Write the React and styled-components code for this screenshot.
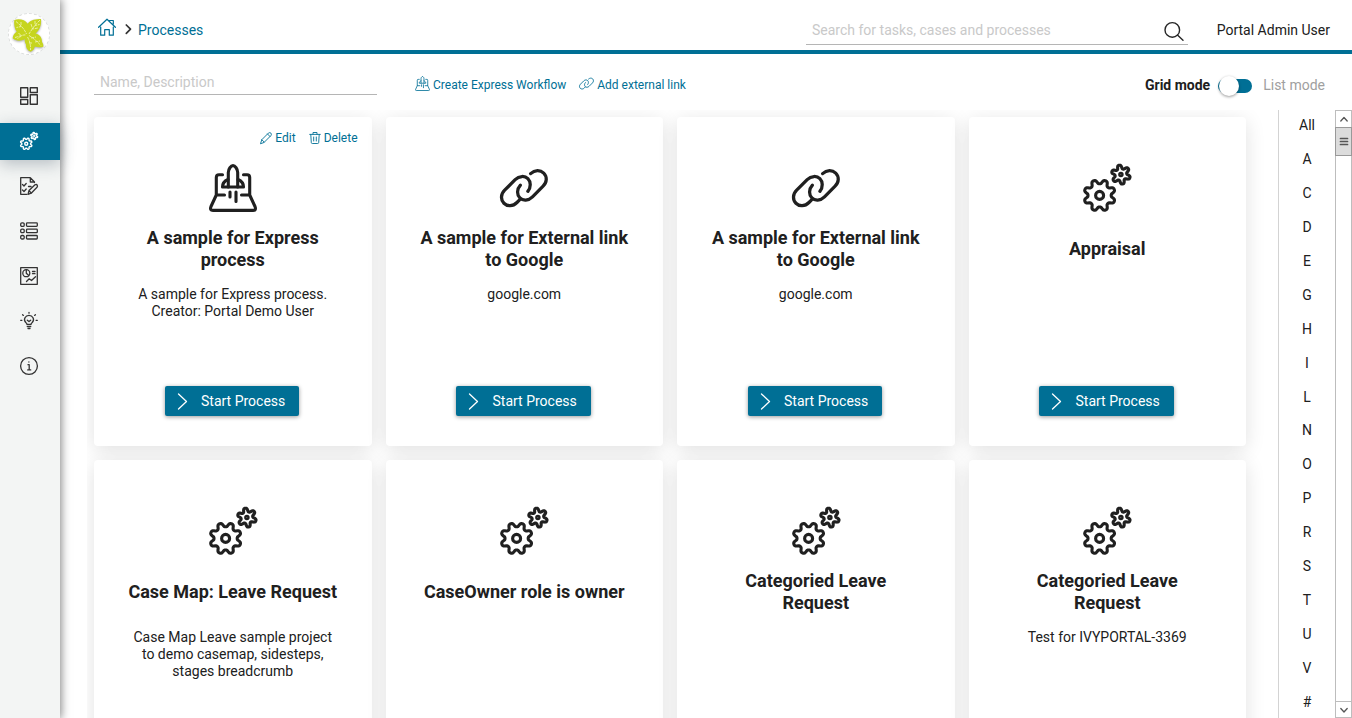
import React from "react";
import styled, { createGlobalStyle, css } from "styled-components";

const BLUE = "#006f95";
const INK = "#202020";

const GlobalStyle = createGlobalStyle`
  * { box-sizing: border-box; }
  html, body { margin: 0; height: 100%; overflow: hidden; background: #fff; }
  body { font-family: Roboto, "Liberation Sans", sans-serif; font-size: 14px; color: ${INK}; }
  svg { display: block; flex: none; overflow: visible; }
`;

const Shell = styled.div`
  display: flex;
  width: 1352px;
  height: 718px;
  overflow: hidden;
`;

const Sidebar = styled.nav`
  width: 60px;
  flex: none;
  position: relative;
  z-index: 2;
  background: #f3f5f4;
  box-shadow: 0 0 9px 1px rgba(0, 0, 0, 0.5);
`;

const Logo = styled.div`
  width: 42px;
  height: 42px;
  margin: 13px 0 23px 8px;
  border-radius: 50%;
  border: 1px dashed #dcdedd;
  background: #fff;
`;

const NavItem = styled.div`
  display: flex;
  align-items: center;
  height: 37px;
  margin-bottom: 8px;
  padding: 0 0 1px 20px;
  color: #333;
  ${(p) => p.$active && css`
    background: ${BLUE};
    color: #fff;
    box-shadow: 0 4px 16px rgba(40, 60, 80, 0.3);
  `}
`;

const Main = styled.main`
  flex: 1;
  min-width: 0;
  display: flex;
  flex-direction: column;
`;

const Header = styled.header`
  display: flex;
  height: 54px;
  flex: none;
  border-bottom: 4px solid ${BLUE};
  padding: 16px 22px 0 38px;
`;

const Breadcrumb = styled.div`
  display: flex;
  align-items: center;
  height: 28px;
  flex: 1;
  color: ${BLUE};
`;

const Crumb = styled.span`
  margin-left: 4px;
`;

const SearchBox = styled.div`
  display: flex;
  justify-content: space-between;
  align-items: center;
  width: 382px;
  height: 29px;
  padding: 0 4px 0 6px;
  border-bottom: 1px solid #b5b5b5;
  color: #c9c9c9;
`;

const UserName = styled.div`
  width: 142px;
  line-height: 28px;
  text-align: right;
  white-space: nowrap;
`;

const Toolbar = styled.div`
  display: flex;
  height: 56px;
  flex: none;
  padding: 15px 27px 0 34px;
`;

const Filter = styled.div`
  width: 283px;
  height: 26px;
  line-height: 27px;
  padding-left: 6px;
  border-bottom: 1px solid #b5b5b5;
  color: #c9c9c9;
`;

const Actions = styled.div`
  display: flex;
  flex: 1;
  gap: 13px;
  height: 32px;
  padding-left: 38px;
`;

const TextLink = styled.a`
  display: flex;
  align-items: center;
  gap: 3px;
  color: ${BLUE};
  font-size: 12px;
  svg { margin-bottom: ${(p) => p.$lift || 0}px; }
`;

const ModeSwitch = styled.div`
  display: flex;
  align-items: center;
  height: 32px;
`;

const ModeLabel = styled.span`
  font-weight: ${(p) => (p.$on ? 700 : 400)};
  color: ${(p) => (p.$on ? INK : "#a0a0a0")};
`;

const Track = styled.div`
  width: 34px;
  height: 14px;
  margin: 2px 11px 0 8px;
  border-radius: 7px;
  background: ${BLUE};
`;

const Knob = styled.div`
  width: 20px;
  height: 20px;
  margin: -3px 0 0 1px;
  border-radius: 50%;
  background: #fff;
  box-shadow: 0 1px 3px rgba(0, 0, 0, 0.4);
`;

const Content = styled.section`
  display: flex;
  flex: 1;
  min-height: 0;
  padding-left: 27px;
`;

const Grid = styled.div`
  flex: 1;
  display: grid;
  grid-template-columns: repeat(4, 277.5px);
  grid-auto-rows: 329px;
  gap: 14px;
  padding: 7px 0 0 7px;
  overflow: hidden;
`;

const Card = styled.article`
  display: flex;
  flex-direction: column;
  align-items: center;
  background: #fff;
  border-radius: 4px;
  box-shadow: 0 4px 20px rgba(0, 0, 0, 0.12);
`;

const CardActions = styled.div`
  display: flex;
  align-self: flex-end;
  align-items: center;
  gap: 13px;
  height: 20px;
  margin: 11px 14px 16px 0;
`;

const Title = styled.h3`
  display: flex;
  align-items: center;
  height: 44px;
  margin: 15px 0;
  font-size: 18px;
  line-height: 22px;
  font-weight: 700;
  text-align: center;
  white-space: pre-line;
`;

const Description = styled.p`
  height: 100px;
  margin: 0;
  line-height: 17px;
  text-align: center;
  white-space: pre-line;
`;

const StartButton = styled.button`
  display: flex;
  align-items: center;
  gap: 13.5px;
  width: 134.5px;
  height: 30px;
  margin-right: 2px;
  padding: 0 0 0 12px;
  border: 0;
  border-radius: 2px;
  background: ${BLUE};
  color: #fff;
  font: inherit;
  white-space: nowrap;
  box-shadow: 0 1px 4px rgba(0, 0, 0, 0.4);
`;

const Alphabet = styled.div`
  width: 57px;
  flex: none;
  border-left: 1px solid #d3d3d3;
`;

const Letter = styled.div`
  height: 33.94px;
  line-height: 31px;
  text-align: center;
`;

const Scrollbar = styled.div`
  display: flex;
  flex-direction: column;
  width: 17px;
  flex: none;
  border: 1px solid #bdbdbd;
`;

const ScrollArrow = styled.div`
  display: grid;
  place-items: center;
  height: 16px;
  border: solid #bdbdbd;
  border-width: ${(p) => (p.$bottom ? "1px 0 0" : "0")};
  margin-top: ${(p) => (p.$bottom ? "auto" : "0")};
`;

const ScrollThumb = styled.div`
  display: grid;
  place-items: center;
  height: 29px;
  margin: 0 -1px;
  border: 1px solid #999;
  background: #dcdcdc;
`;

function gearPath(cx, cy, radius, depth, teeth, phase) {
  const count = 120;
  const points = Array.from({ length: count }, (_, i) => {
    const angle = (i / count) * Math.PI * 2;
    const wave = Math.tanh(1.5 * Math.cos(teeth * (angle - phase))) / Math.tanh(1.5);
    const r = radius + depth * wave;
    return `${(cx + r * Math.cos(angle)).toFixed(2)} ${(cy + r * Math.sin(angle)).toFixed(2)}`;
  });
  return `M${points.join("L")}Z`;
}

const BIG_GEAR = gearPath(16.6, 31.4, 13.7, 2.1, 8, Math.PI / 8);
const SMALL_GEAR = gearPath(37.9, 10.6, 7.7, 1.8, 6, -1.75);

const shapes = {
  gears: (
    <>
      <path d={BIG_GEAR} />
      <circle cx="16.6" cy="31.4" r="4" />
      <path d={SMALL_GEAR} />
      <circle cx="37.9" cy="10.6" r="1.2" />
    </>
  ),
  link: (
    <g transform="translate(24.300 24) scale(1.05) translate(-24 -23.200)">
      <path d="M19.5 34.5 17 37c-3.9 3.9-9.2 3.9-12.4.7s-3.2-8.5.7-12.4L15.3 15.3c3.9-3.9 9.2-3.9 12.1-1 2.8 2.8 3.2 8.2 0 12.1" />
      <path d="M30 9.5c4-3.6 9.2-3.6 12.5-.4 3.3 3.3 3.3 8.5-.6 12.4L31.8 31.6c-3.9 3.9-9.2 3.9-12 1-2.8-2.8-3.3-8 .5-12.1" />
    </g>
  ),
  rocket: (
    <>
      <path d="M13.5 10.800H10q-2.700 0-2.700 2.700V31h8.200M34.500 10.800H38q2.700 0 2.700 2.700V31h-8.200M7.300 31 2 42.500Q.5 46.400 4 46.400h40q3.500 0 2-3.900L40.700 31" />
      <path d="M19.300 23V8.500C19.300 5 22 1.600 24 1.600S28.700 5 28.700 8.500V23" />
      <path d="M19 15.500c-3.500 1.500-5.500 4-5.500 7.500h21c0-3.500-2-6-5.500-7.500M21 28v5M27 28v9.500" />
    </>
  ),
};

function ProcessIcon({ name, size = 48, weight = 3.1 }) {
  return (
    <svg width={size} height={size} viewBox="0 0 48 48" fill="none" stroke="currentColor" strokeWidth={weight} strokeLinecap="round" strokeLinejoin="round">
      {shapes[name]}
    </svg>
  );
}

function LineIcon({ size = 18, box = 18, weight = 1.3, children, ...rest }) {
  return (
    <svg width={size} height={size} viewBox={`0 0 ${box} ${box}`} fill="none" stroke="currentColor" strokeWidth={weight} strokeLinecap="round" strokeLinejoin="round" {...rest}>
      {children}
    </svg>
  );
}

const navIcons = [
  <LineIcon key="dashboard" weight={1.4}>
    <path d="M.7.7h7v9.600h-7zM10.300.7h7v4.800h-7zM.7 12.500h7v4.800h-7zM10.300 7.700h7v9.600h-7z" />
  </LineIcon>,
  <ProcessIcon key="processes" name="gears" size={18} weight={3.800} />,
  <LineIcon key="tasks">
    <path d="M14.500 5.500V5L10.300.7H.7v16.600h6M10.300.7V5h4.200M2.500 7.500 4 9l2.200-2.500M2.500 13 4 14.500 6.200 12M8.500 9.500H11M8 17.300l1-3.800 6-5.700q1.500-.8 2.200.3t-.2 2.200l-5.800 5.900zM9 13.500l2.200 2.700" />
  </LineIcon>,
  <LineIcon key="cases">
    <rect x=".7" y=".9" width="3.500" height="3.500" rx="1.200" />
    <rect x=".7" y="7.200" width="3.500" height="3.500" rx="1.200" />
    <rect x=".7" y="13.500" width="3.500" height="3.500" rx="1.200" />
    <rect x="6.500" y=".9" width="10.800" height="3.500" rx=".8" />
    <rect x="6.500" y="7.200" width="10.800" height="3.500" rx=".8" />
    <rect x="6.500" y="13.500" width="10.800" height="3.500" rx=".8" />
  </LineIcon>,
  <LineIcon key="statistics">
    <path d="M.7.7h16.600v16.600H.7zM6.300 2.700v3.500l2.200 2M12.500 4.500H15M12.500 6.700H15M6.500 14.500l2.700-2.700 2.300 1.700 4-3.800" />
    <circle cx="6.300" cy="6.200" r="3.500" />
  </LineIcon>,
  <LineIcon key="guide" weight={1.300}>
    <path d="M7 12.500q0-1-1.200-2C2.800 7.500 5.500 3.300 9 3.300s6.200 4.200 3.200 7.200q-1.200 1-1.200 2zM7.200 14.600h3.600M8 16.500h2M7.300 8.200 9 9.600l1.700-1.400M9 .5v.7M2.600 2.700l.8.7M15.400 2.700l-.8.7M.7 8.300h1.200M16.100 8.300h1.200" />
  </LineIcon>,
  <LineIcon key="about">
    <circle cx="9" cy="9" r="8.400" />
    <path d="M8 7.700h1.200v5M7.700 12.900h3M8.900 5v.1" />
  </LineIcon>,
];

const Leaf = styled.svg`
  filter: drop-shadow(0 1px 1px #aaa);
`;

function LeafLogo() {
  return (
    <Leaf width="40" height="40" viewBox="0 0 40 40">
      <path fill="#c6d51e" d="M5.300 6C10 4.500 16 5.500 18.800 9.800 21.500 5.500 27 5 32 5c.6 6-1.500 11.500-5.500 14.500 5 1 6.500 5 6.500 8.500 1.200 1.500 1.500 3 1.300 4.700-3 .8-6 .8-8.500-.2-.3 2.500-2 4.200-4.100 5.200-3.500-1.200-5-4-4.700-7.500-1.200-1.700-1.500-3.500-1-5.200-4 2.500-9.300 2-12.300-.7.200-3 1.500-5 4-6.500C5.500 14.500 4.800 10 5.300 6z" />
      <path fill="none" stroke="#f1f5bd" strokeWidth=".8" strokeDasharray="3 .8" d="M7 7.500c4 3.500 8 6.500 10.500 12.500M31 6c-5 5-8 9-11 14M6 23.500c4-1 8-3 11-2.500M20 21.500c5 3 8 6 12 10M18.500 23q3.500 6 3 13M12 8v4.500L7.500 13.500M22 10l1.500 5 5.500-1M26 7v4.500l4.500-1M9.500 19l3 3-4 2.500M22 24l5-1M26 28l5-1M20 29h3" />
    </Leaf>
  );
}

const pencil = (
  <LineIcon size={12} box={12} weight={0.9}>
    <path d="m.6 11.400 1.200-3.700 6.600-6.600q1.500-1 2.500 0t0 2.500l-6.600 6.600zM1.800 7.700l2.500 2.500M7.500 2l2.500 2.500" />
  </LineIcon>
);

const trash = (
  <LineIcon size={12} box={12} weight={0.9}>
    <path d="M.7 2.400h10.600M4 2.200V.5h4v1.700M1.800 2.600l.5 8q.1.900 1 .9h5.400q.9 0 1-.9l.5-8M4.700 5v4M7.300 5v4" />
  </LineIcon>
);

const cards = [
  { icon: "rocket", title: "A sample for Express\nprocess", text: "A sample for Express process.\nCreator: Portal Demo User", editable: true },
  { icon: "link", title: "A sample for External link\nto Google", text: "google.com" },
  { icon: "link", title: "A sample for External link\nto Google", text: "google.com" },
  { icon: "gears", title: "Appraisal", text: "" },
  { icon: "gears", title: "Case Map: Leave Request", text: "Case Map Leave sample project\nto demo casemap, sidesteps,\nstages breadcrumb" },
  { icon: "gears", title: "CaseOwner role is owner", text: "" },
  { icon: "gears", title: "Categoried Leave\nRequest", text: "" },
  { icon: "gears", title: "Categoried Leave\nRequest", text: "Test for IVYPORTAL-3369" },
];

const letters = ["All", ..."ACDEGHILNOPRSTUV#"];

function ProcessCard({ icon, title, text, editable }) {
  return (
    <Card>
      <CardActions>
        {editable && (
          <>
            <TextLink>{pencil}Edit</TextLink>
            <TextLink>{trash}Delete</TextLink>
          </>
        )}
      </CardActions>
      <ProcessIcon name={icon} />
      <Title>{title}</Title>
      <Description>{text}</Description>
      <StartButton>
        <LineIcon size={11} box={11} weight={1.300}>
          <path d="m1.500-2 8 7.500-8 7.500" />
        </LineIcon>
        Start Process
      </StartButton>
    </Card>
  );
}

export default function App() {
  return (
    <Shell>
      <GlobalStyle />
      <Sidebar>
        <Logo><LeafLogo /></Logo>
        {navIcons.map((icon, i) => (
          <NavItem key={i} $active={i === 1}>{icon}</NavItem>
        ))}
      </Sidebar>
      <Main>
        <Header>
          <Breadcrumb>
            <LineIcon size={18} weight={1.200}>
              <path d="M.6 8.300 9 .2l8.400 8.100M2.700 8v8.200h4v-5.500h4.600v5.500h4V8M11.500 1.500h3.800v3.500" transform="translate(0 -2)" />
            </LineIcon>
            <LineIcon size={18} weight={1.700} stroke="#333">
              <path d="m10.300 4 4.200 4.200-4.200 4.200" />
            </LineIcon>
            <Crumb>Processes</Crumb>
          </Breadcrumb>
          <SearchBox>
            Search for tasks, cases and processes
            <LineIcon size={20} box={20} weight={1.400} stroke="#262626">
              <circle cx="8.300" cy="9.900" r="7.300" />
              <path d="m13.700 15.300 5.300 5" />
            </LineIcon>
          </SearchBox>
          <UserName>Portal Admin User</UserName>
        </Header>
        <Toolbar>
          <Filter>Name, Description</Filter>
          <Actions>
            <TextLink $lift={3}><ProcessIcon name="rocket" size={15} weight={2.600} />Create Express Workflow</TextLink>
            <TextLink $lift={4}><ProcessIcon name="link" size={15} weight={2.600} />Add external link</TextLink>
          </Actions>
          <ModeSwitch>
            <ModeLabel $on>Grid mode</ModeLabel>
            <Track><Knob /></Track>
            <ModeLabel>List mode</ModeLabel>
          </ModeSwitch>
        </Toolbar>
        <Content>
          <Grid>
            {cards.map((card, i) => <ProcessCard key={i} {...card} />)}
          </Grid>
          <Alphabet>
            {letters.map((letter) => <Letter key={letter}>{letter}</Letter>)}
          </Alphabet>
          <Scrollbar>
            <ScrollArrow>
              <LineIcon size={8} box={8} weight={1.300}><path d="m.8 6 3.200-3.500L7.200 6" stroke="#555" /></LineIcon>
            </ScrollArrow>
            <ScrollThumb>
              <LineIcon size={8} box={8} weight={1.700}><path d="M.5 .5h7M.5 3.500h7M.5 6.500h7" stroke="#555" /></LineIcon>
            </ScrollThumb>
            <ScrollArrow $bottom>
              <LineIcon size={8} box={8} weight={1.300}><path d="M.8 2.500 4 6l3.200-3.500" stroke="#555" /></LineIcon>
            </ScrollArrow>
          </Scrollbar>
        </Content>
      </Main>
    </Shell>
  );
}
